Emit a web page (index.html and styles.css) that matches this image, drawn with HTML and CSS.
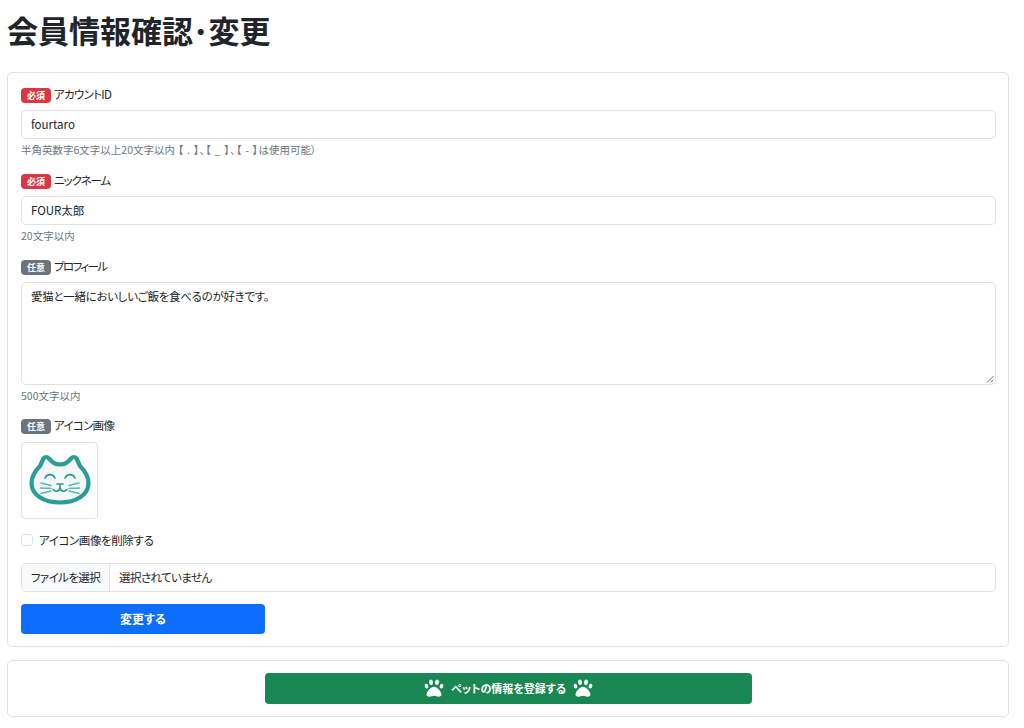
FILE: index.html
```html
<!DOCTYPE html>
<html lang="ja">
<head>
<meta charset="utf-8">
<title>会員情報確認・変更</title>
<link rel="stylesheet" href="styles.css">
</head>
<body>
<h1 class="title">会員情報確認･変更</h1>
<form class="card card-form">
  <div class="field">
    <div class="label-row"><span class="badge badge-req">必須</span><span class="jp-label">アカウントID</span></div>
    <div class="input">fourtaro</div>
    <div class="help">半角英数字6文字以上20文字以内<span class="help-sym"> 【 . 】、【 _ 】、【 - 】</span>は使用可能）</div>
  </div>
  <div class="field">
    <div class="label-row"><span class="badge badge-req">必須</span><span class="jp-tight">ニックネーム</span></div>
    <div class="input">FOUR太郎</div>
    <div class="help">20文字以内</div>
  </div>
  <div class="field field-last">
    <div class="label-row"><span class="badge badge-opt">任意</span><span class="jp-tighter">プロフィール</span></div>
    <div class="input textarea"><span class="jp-body">愛猫と一緒においしいご飯を食べるのが好きです。</span>
      <svg class="grip" width="8" height="8" viewBox="0 0 8 8"><path d="M1 7.500 7.500 1M4.500 7.500 7.500 4.500" stroke="#777" stroke-width="1" fill="none"/></svg>
    </div>
    <div class="help">500文字以内</div>
  </div>
  <div class="label-row label-image"><span class="badge badge-opt">任意</span><span class="jp-label">アイコン画像</span></div>
  <div class="thumb">
    <svg width="64" height="58" viewBox="0 0 64 58">
      <g class="soft">
      <path d="M32 12.500C27 12.500 25 11 21 6.500C19 4.500 17 4.500 15.500 6.500L12 14C6 20 3.500 26 3.500 31C3.500 43 16 50.500 32 50.500C48 50.500 60.500 43 60.500 31C60.500 26 58 20 52 14L48.500 6.500C47 4.500 45 4.500 43 6.500C39 11 37 12.500 32 12.500Z" fill="#f4f7f6" stroke="#2a9d9a" stroke-width="4.200" stroke-linejoin="round"/>
      <path d="M17 26C19 21.500 25 21.500 27 26M37 26C39 21.500 45 21.500 47 26M29 32H35M32 32V36C31 40 27 40 25 37.500M32 36C33 40 37 40 39 37.500" fill="none" stroke="#2a9d9a" stroke-width="1.700" stroke-linecap="round"/>
      <path d="M13 31 23 33.500M12.500 36 23 36.500M13 41.500 23 39M41 33.500 51 31M41 36.500 51.500 36M41 39 51 41.500" fill="none" stroke="#5cb8b5" stroke-width="1.400" stroke-linecap="round"/>
      </g>
    </svg>
  </div>
  <label class="check-row"><span class="check"></span><span class="jp">アイコン画像を削除する</span></label>
  <div class="file"><span class="file-btn"><span class="jp-file">ファイルを選択</span></span><span class="file-name jp-file">選択されていません</span></div>
  <button type="button" class="btn btn-primary">変更する</button>
</form>
<div class="card card-action">
  <button type="button" class="btn btn-success">
    <svg class="paw" viewBox="0 0 512 512"><use href="#paw"/></svg>
    <span>ペットの情報を登録する</span>
    <svg class="paw" viewBox="0 0 512 512"><use href="#paw"/></svg>
  </button>
</div>
<svg class="defs" width="0" height="0"><defs>
  <g id="paw" fill="currentColor">
    <path d="M256 224c-79 0-191 122-191 199 0 35 27 56 71 56 48 0 80-25 120-25 41 0 73 25 120 25 44 0 71-21 71-56 0-77-112-199-191-199z"/>
    <ellipse cx="64" cy="208" rx="46" ry="62" transform="rotate(-16 64 208)"/>
    <ellipse cx="448" cy="208" rx="46" ry="62" transform="rotate(16 448 208)"/>
    <ellipse cx="180" cy="110" rx="52" ry="72" transform="rotate(-8 180 110)"/>
    <ellipse cx="332" cy="110" rx="52" ry="72" transform="rotate(8 332 110)"/>
  </g>
</defs></svg>
</body>
</html>
```
FILE: styles.css
```css
* { box-sizing: border-box; }
html, body { margin: 0; padding: 0; background: #fff; }
body {
  padding: 0 15px 11px 7px;
  font-family: "Noto Sans CJK JP", "Noto Sans", sans-serif;
  font-size: 11.500px;
  line-height: 18px;
  color: #212529;
  font-feature-settings: "palt";
}
.title {
  margin: 0 0 19px 0;
  height: 53px;
  font-size: 31px;
  line-height: 60px;
  font-weight: 700;
  font-feature-settings: normal;
}
.card {
  border: 1px solid #dfe2e6;
  border-radius: 5px;
  padding: 12px 12px 12px 13px;
  background: #fff;
}
.card-form { height: 575px; display: flex; flex-direction: column; }
.card-action { margin-top: 13px; height: 57px; display: flex; justify-content: center; }
.field { margin-bottom: 13px; }
.field-last { margin-bottom: 12px; }
.label-row { display: flex; align-items: center; gap: 3px; height: 18px; margin-bottom: 7px; }
.label-image { margin-bottom: 8px; }
.jp { letter-spacing: -0.4px; }
.jp-label { letter-spacing: -0.7px; }
.jp-body { letter-spacing: -0.3px; }
.jp-file { letter-spacing: -0.6px; }
.jp-tight { letter-spacing: -1.100px; }
.jp-tighter { letter-spacing: -1.600px; }
.badge {
  display: inline-block;
  width: 30px;
  height: 15px;
  border-radius: 4px;
  color: #fff;
  font-size: 9px;
  line-height: 15px;
  font-weight: 700;
  text-align: center;
  margin-top: 2px;
}
.badge-req { background: #dc3545; }
.badge-opt { background: #6c757d; }
.input {
  position: relative;
  height: 29px;
  border: 1px solid #dee2e6;
  border-radius: 5px;
  padding: 4px 9px;
  background: #fff;
}
.textarea { height: 103px; }
.grip { position: absolute; right: 1px; bottom: 1px; }
.help { font-size: 10.500px; line-height: 16px; margin-top: 3px; color: #6c757d; }
.help-sym { letter-spacing: 0.7px; }
.thumb {
  width: 77px;
  height: 77px;
  border: 1px solid #dee2e6;
  border-radius: 4px;
  display: flex;
  align-items: center;
  justify-content: center;
}
.soft { filter: blur(0.45px); }
.check-row { display: flex; align-items: center; gap: 6px; margin-top: 12px; height: 18px; }
.check { width: 12px; height: 12px; border: 1px solid #dee2e6; border-radius: 3px; background: #fff; }
.file {
  display: flex;
  height: 29px;
  margin-top: 14px;
  border: 1px solid #dee2e6;
  border-radius: 5px;
  overflow: hidden;
  line-height: 27px;
}
.file-btn { width: 88px; text-align: center; background: #f8f9fa; border-right: 1px solid #dee2e6; }
.file-name { padding-left: 9px; }
.btn {
  display: flex;
  align-items: center;
  justify-content: center;
  border: 0;
  border-radius: 4px;
  color: #fff;
  font-family: inherit;
  font-feature-settings: "palt";
  font-weight: 700;
  font-size: 12px;
  padding: 0 0 2px;
}
.btn-primary { width: 244px; height: 30px; margin-top: 12px; background: #0d6efd; }
.btn-success { width: 487px; height: 31px; gap: 7px; background: #198754; font-size: 11px; }
.paw { width: 20px; height: 20px; color: #fff; }
.defs { position: absolute; }
```
